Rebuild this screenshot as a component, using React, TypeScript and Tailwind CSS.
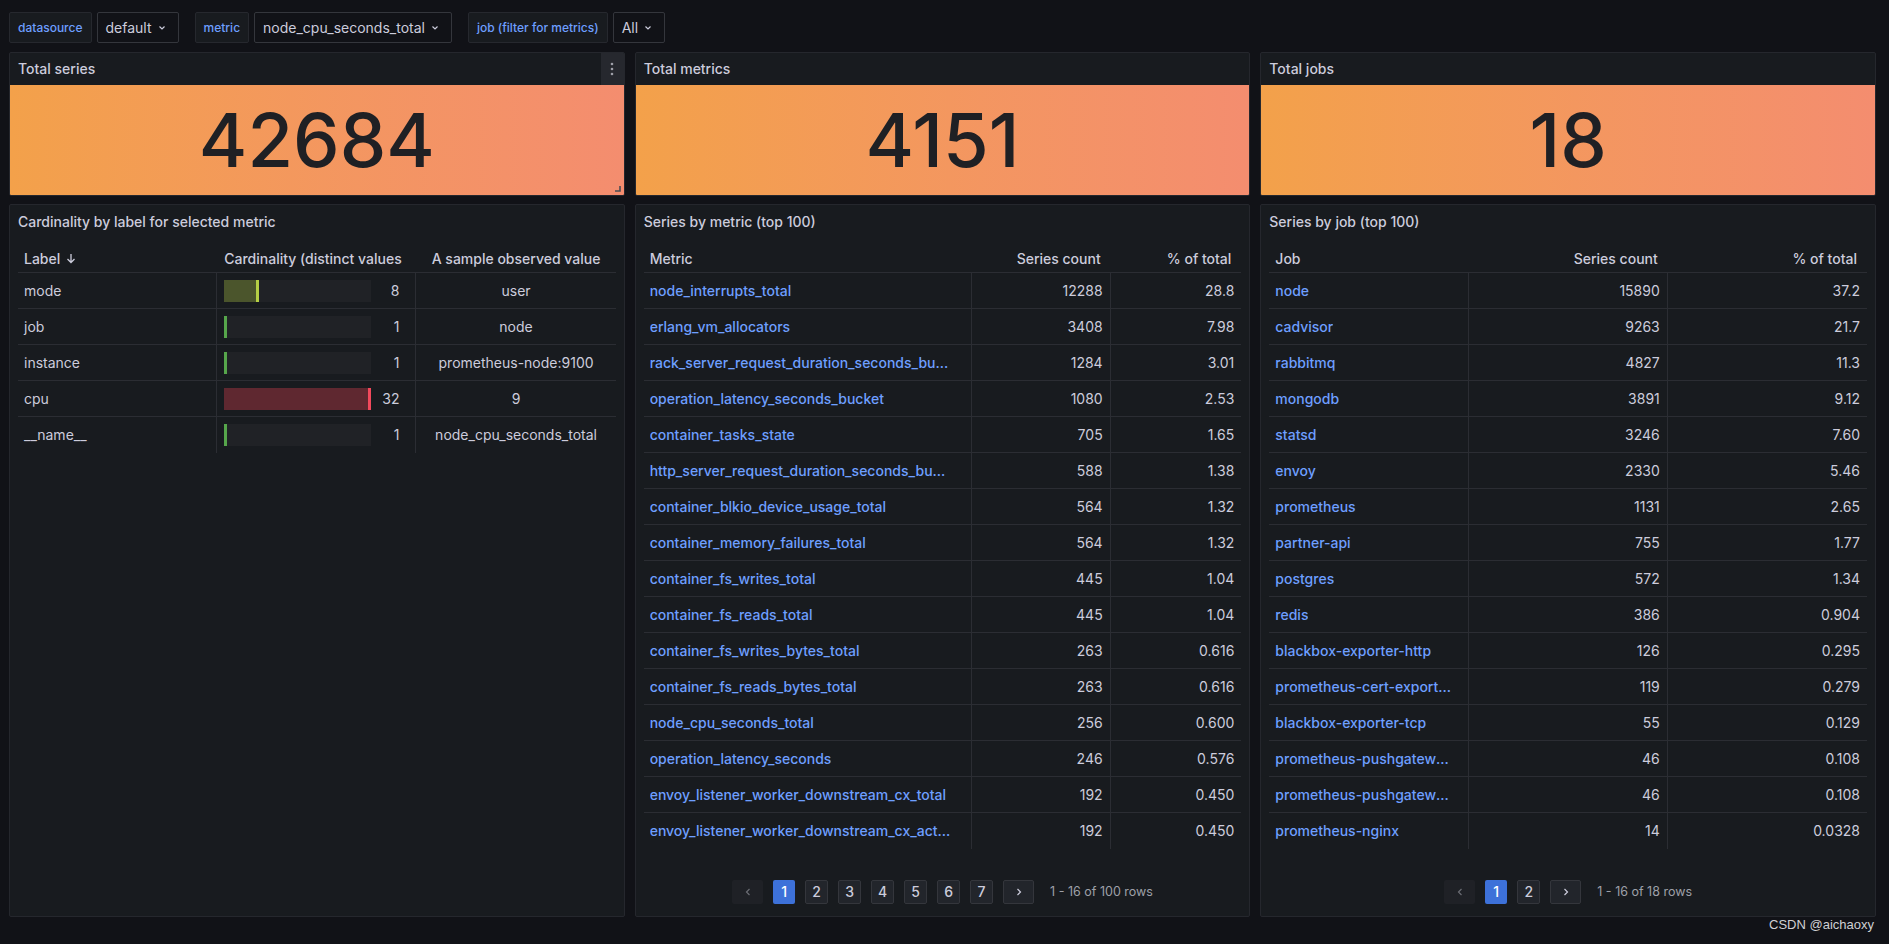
import React from "react";

const metricRows: [string, string, string][] = [
  ["node_interrupts_total", "12288", "28.8"],
  ["erlang_vm_allocators", "3408", "7.98"],
  ["rack_server_request_duration_seconds_bucket", "1284", "3.01"],
  ["operation_latency_seconds_bucket", "1080", "2.53"],
  ["container_tasks_state", "705", "1.65"],
  ["http_server_request_duration_seconds_bucket", "588", "1.38"],
  ["container_blkio_device_usage_total", "564", "1.32"],
  ["container_memory_failures_total", "564", "1.32"],
  ["container_fs_writes_total", "445", "1.04"],
  ["container_fs_reads_total", "445", "1.04"],
  ["container_fs_writes_bytes_total", "263", "0.616"],
  ["container_fs_reads_bytes_total", "263", "0.616"],
  ["node_cpu_seconds_total", "256", "0.600"],
  ["operation_latency_seconds", "246", "0.576"],
  ["envoy_listener_worker_downstream_cx_total", "192", "0.450"],
  ["envoy_listener_worker_downstream_cx_active", "192", "0.450"],
];

const jobRows: [string, string, string][] = [
  ["node", "15890", "37.2"],
  ["cadvisor", "9263", "21.7"],
  ["rabbitmq", "4827", "11.3"],
  ["mongodb", "3891", "9.12"],
  ["statsd", "3246", "7.60"],
  ["envoy", "2330", "5.46"],
  ["prometheus", "1131", "2.65"],
  ["partner-api", "755", "1.77"],
  ["postgres", "572", "1.34"],
  ["redis", "386", "0.904"],
  ["blackbox-exporter-http", "126", "0.295"],
  ["prometheus-cert-exporter", "119", "0.279"],
  ["blackbox-exporter-tcp", "55", "0.129"],
  ["prometheus-pushgateway", "46", "0.108"],
  ["prometheus-pushgateway", "46", "0.108"],
  ["prometheus-nginx", "14", "0.0328"],
];

const labelRows = [
  { label: "mode", value: 8, sample: "user", fill: "bg-[#4b552c]", line: "border-[#b5cf45]" },
  { label: "job", value: 1, sample: "node", fill: "bg-[#202226]", line: "border-[#56a64b]" },
  { label: "instance", value: 1, sample: "prometheus-node:9100", fill: "bg-[#202226]", line: "border-[#56a64b]" },
  { label: "cpu", value: 32, sample: "9", fill: "bg-[#5f2830]", line: "border-[#f2495c]" },
  { label: "__name__", value: 1, sample: "node_cpu_seconds_total", fill: "bg-[#202226]", line: "border-[#56a64b]" },
];

function Chevron() {
  return (
    <svg width="8" height="6" viewBox="0 0 8 6" className="text-[#ccccdc]">
      <path d="M1.5 1.5 L4 4 L6.5 1.5" fill="none" stroke="currentColor" strokeWidth="1.2" />
    </svg>
  );
}

function VarPicker({ label, value }: { label: string; value: string }) {
  return (
    <div className="flex h-[31px] gap-[5px]">
      <div className="flex items-center rounded-[2px] border border-[#26282e] bg-[#181b1f] px-2 text-xs font-medium text-[#6e9fff]">
        {label}
      </div>
      <div className="flex items-center gap-[6px] rounded-[2px] border border-[#34363c] bg-[#111217] pl-2 pr-[12px] text-sm text-[#ccccdc]">
        {value}
        <Chevron />
      </div>
    </div>
  );
}

function StatPanel({ title, value, menu }: { title: string; value: string; menu?: boolean }) {
  return (
    <div className="relative flex h-[144px] flex-col overflow-hidden rounded-[2px] border border-[#25272d] bg-[#181b1f]">
      <div className="flex h-[32px] shrink-0 items-center justify-between">
        <span className="px-2 text-sm font-medium text-[#ccccdc]">{title}</span>
        {menu && (
          <div className="flex h-full w-[23px] items-center justify-center bg-[#26282e]">
            <svg width="4" height="14" viewBox="0 0 4 14">
              <circle cx="2" cy="2" r="1.3" fill="#9d9fa8" />
              <circle cx="2" cy="7" r="1.3" fill="#9d9fa8" />
              <circle cx="2" cy="12" r="1.3" fill="#9d9fa8" />
            </svg>
          </div>
        )}
      </div>
      <div className="flex flex-1 items-center justify-center bg-linear-to-r from-[#f3a14a] to-[#f48d6f]">
        <span className="text-[74px] font-medium leading-none text-[#1f2024]">{value}</span>
      </div>
      {menu && (
        <svg width="6" height="6" viewBox="0 0 6 6" className="absolute bottom-[3px] right-[3px]">
          <path d="M5 0 V5 H0" fill="none" stroke="#4a4c52" strokeWidth="1.6" />
        </svg>
      )}
    </div>
  );
}

function Pagination({ pages, summary }: { pages: number; summary: string }) {
  return (
    <div className="flex items-center justify-center gap-[10px] pb-[12px]">
      <div className="flex h-6 w-[31px] items-center justify-center rounded-[2px] bg-[#1f2126] text-[#6b6d74]">
        <svg width="6" height="8" viewBox="0 0 6 8">
          <path d="M4.5 1 L1.5 4 L4.5 7" fill="none" stroke="currentColor" strokeWidth="1.2" />
        </svg>
      </div>
      {Array.from({ length: pages }, (_, i) => i + 1).map((p) => (
        <div
          key={p}
          className={
            p === 1
              ? "flex h-6 w-[22px] items-center justify-center rounded-[2px] bg-[#3d71d9] text-sm font-medium text-white"
              : "flex h-6 w-[23px] items-center justify-center rounded-[2px] border border-[#34363c] bg-[#22252b] text-sm font-medium text-[#ccccdc]"
          }
        >
          {p}
        </div>
      ))}
      <div className="flex h-6 w-[31px] items-center justify-center rounded-[2px] border border-[#34363c] bg-[#22252b] text-[#ccccdc]">
        <svg width="6" height="8" viewBox="0 0 6 8">
          <path d="M1.5 1 L4.5 4 L1.5 7" fill="none" stroke="currentColor" strokeWidth="1.2" />
        </svg>
      </div>
      <span className="ml-[6px] text-[12.5px] text-[#9ea0a8]">{summary}</span>
    </div>
  );
}

function PanelTitle({ children }: { children: React.ReactNode }) {
  return <div className="flex h-[33px] shrink-0 items-center px-2 text-sm font-medium text-[#ccccdc]">{children}</div>;
}

function CountTable({
  first,
  rows,
  cols,
  namePad,
}: {
  first: string;
  rows: [string, string, string][];
  cols: string;
  namePad: string;
}) {
  return (
    <div className="px-2 pt-[7px]">
      <div className={`grid h-[28px] items-center border-b border-[#2b2d33] font-medium ${cols}`}>
        <span className="px-[6px]">{first}</span>
        <span className="pr-[10px] text-right">Series count</span>
        <span className="pr-[10px] text-right">% of total</span>
      </div>
      {rows.map(([name, count, pct], i) => (
        <div
          key={i}
          className={`grid h-[36px] ${cols} ${i < rows.length - 1 ? "border-b border-[#2b2d33]" : ""}`}
        >
          <span className={`flex min-w-0 items-center border-r border-[#2b2d33] pl-[6px] ${namePad}`}>
            <span className="truncate font-medium text-[#6e9fff]">{name}</span>
          </span>
          <span className="flex items-center justify-end border-r border-[#2b2d33] px-[7px]">{count}</span>
          <span className="flex items-center justify-end px-[7px]">{pct}</span>
        </div>
      ))}
    </div>
  );
}

export default function App() {
  return (
    <div className="relative min-h-screen w-full bg-[#111217] font-['Inter',sans-serif] text-sm text-[#ccccdc]">
      {/* Variables */}
      <div className="flex gap-4 pl-[9px] pt-3">
        <VarPicker label="datasource" value="default" />
        <VarPicker label="metric" value="node_cpu_seconds_total" />
        <VarPicker label="job (filter for metrics)" value="All" />
      </div>

      {/* Stats */}
      <div className="mt-[9px] grid grid-cols-3 gap-[10px] pl-[9px] pr-[13px]">
        <StatPanel title="Total series" value="42684" menu />
        <StatPanel title="Total metrics" value="4151" />
        <StatPanel title="Total jobs" value="18" />
      </div>

      {/* Tables */}
      <div className="mt-[8px] grid grid-cols-3 gap-[10px] pl-[9px] pr-[13px]">
        <div className="flex h-[713px] flex-col rounded-[2px] border border-[#25272d] bg-[#181b1f]">
          <PanelTitle>Cardinality by label for selected metric</PanelTitle>
          <div className="px-2 pt-[7px]">
            <div className="grid h-[28px] grid-cols-3 items-center border-b border-[#2b2d33] font-medium">
              <span className="flex items-center gap-[6px] px-[6px]">
                Label
                <svg width="10" height="11" viewBox="0 0 10 11">
                  <path d="M5 1 V9.5 M1.5 6 L5 9.5 L8.5 6" fill="none" stroke="#ccccdc" strokeWidth="1.3" />
                </svg>
              </span>
              <span className="min-w-0 pl-[7px] pr-[14px]">
                <span className="block overflow-hidden whitespace-nowrap">Cardinality (distinct values)</span>
              </span>
              <span className="text-center">A sample observed value</span>
            </div>
            {labelRows.map((r, i) => (
              <div
                key={r.label}
                className={`grid h-[36px] grid-cols-3 ${i < labelRows.length - 1 ? "border-b border-[#2b2d33]" : ""}`}
              >
                <span className="flex items-center border-r border-[#2b2d33] px-[6px]">{r.label}</span>
                <span className="flex items-center border-r border-[#2b2d33] pl-[7px] pr-[16px]">
                  <span className="flex h-[22px] w-[147px] shrink-0 bg-[#202226]">
                    <span
                      className={`h-full border-r-[3px] ${r.fill} ${r.line}`}
                      style={{ width: r.value === 32 ? 147 : r.value === 8 ? 35 : 3 }}
                    />
                  </span>
                  <span className="flex-1 text-right">{r.value}</span>
                </span>
                <span className="flex items-center justify-center px-[6px]">{r.sample}</span>
              </div>
            ))}
          </div>
        </div>

        <div className="flex h-[713px] flex-col rounded-[2px] border border-[#25272d] bg-[#181b1f]">
          <PanelTitle>Series by metric (top 100)</PanelTitle>
          <CountTable first="Metric" rows={metricRows} cols="grid-cols-[328px_139px_1fr]" namePad="pr-[19px]" />
          <div className="flex-1" />
          <Pagination pages={7} summary="1 - 16 of 100 rows" />
        </div>

        <div className="flex h-[713px] flex-col rounded-[2px] border border-[#25272d] bg-[#181b1f]">
          <PanelTitle>Series by job (top 100)</PanelTitle>
          <CountTable first="Job" rows={jobRows} cols="grid-cols-3" namePad="pr-[16px]" />
          <div className="flex-1" />
          <Pagination pages={2} summary="1 - 16 of 18 rows" />
        </div>
      </div>

      <span className="absolute bottom-[9px] right-[15px] font-['Liberation_Sans',sans-serif] text-[13px] text-[#cfd0d4]">
        CSDN @aichaoxy
      </span>
    </div>
  );
}
